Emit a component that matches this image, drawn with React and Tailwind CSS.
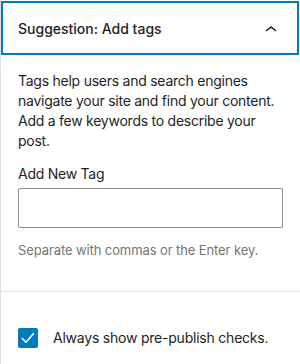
import { useState } from 'react';

// Pre-publish panel: tag suggestion + "always show" checkbox
function ChevronUp() {
  return (
    <svg viewBox="0 0 24 24" width="24" height="24" className="mt-[4px] shrink-0" aria-hidden="true">
      <path d="M6.5 12.4L12 8l5.5 4.4-.9 1.2L12 10l-4.6 3.6-1-1.2z" fill="#1e1e1e" />
    </svg>
  );
}

function CheckIcon() {
  return (
    <svg viewBox="0 0 20 20" width="20" height="20" aria-hidden="true">
      <path d="M4.5 10.6l3.4 3.6 7.6-8.6" fill="none" stroke="#fff" strokeWidth="1.6" strokeLinecap="round" strokeLinejoin="round" />
    </svg>
  );
}

export default function App() {
  const [tag, setTag] = useState('');
  const [alwaysShow, setAlwaysShow] = useState(true);

  return (
    <div
      className="w-[300px] h-[364px] bg-white border-l border-[#e0e0e0] text-[#1e1e1e] overflow-hidden"
      style={{ fontFamily: 'Inter, "Noto Sans", sans-serif' }}
    >
      <div className="border-b border-[#e0e0e0]">
        <button
          type="button"
          className="mt-px mr-px w-[298px] h-[54px] flex items-center justify-between pl-[17px] pr-[16px] text-left shadow-[inset_0_0_0_2px_#007cba]"
        >
          <span className="text-[14px] font-medium">
            Suggestion: <span>Add tags</span>
          </span>
          <ChevronUp />
        </button>

        <div className="pl-[17px] pr-[12px] pt-[16px] pb-[32px] tracking-[-0.25px]">
          <p className="text-[14px] leading-[20px]">
            Tags help users and search engines navigate your site and find your content. Add a few keywords to describe your post.
          </p>

          <label className="block mt-[13px] mb-[4px] text-[14px] leading-[20px]" htmlFor="new-tag">
            Add New Tag
          </label>
          <input
            id="new-tag"
            value={tag}
            onChange={(e) => setTag(e.target.value)}
            className="block w-[265px] h-[40px] border border-[#8c8f94] rounded-[2px] px-2 text-[14px] outline-none"
          />
          <p className="mt-[13px] text-[13px] leading-[18px] text-[#757575] tracking-[-0.1px]">
            Separate with commas or the Enter key.
          </p>
        </div>
      </div>

      <label className="flex items-center gap-[15px] pl-[17px] pt-[36px] cursor-pointer">
        <span
          onClick={() => setAlwaysShow(!alwaysShow)}
          className={
            alwaysShow
              ? 'w-[20px] h-[20px] rounded-[2px] bg-[#007cba] flex items-center justify-center'
              : 'w-[20px] h-[20px] rounded-[2px] border border-[#1e1e1e] bg-white'
          }
        >
          {alwaysShow && <CheckIcon />}
        </span>
        <span className="text-[14px] leading-[20px] tracking-[-0.22px]">Always show pre-publish checks.</span>
      </label>
    </div>
  );
}
